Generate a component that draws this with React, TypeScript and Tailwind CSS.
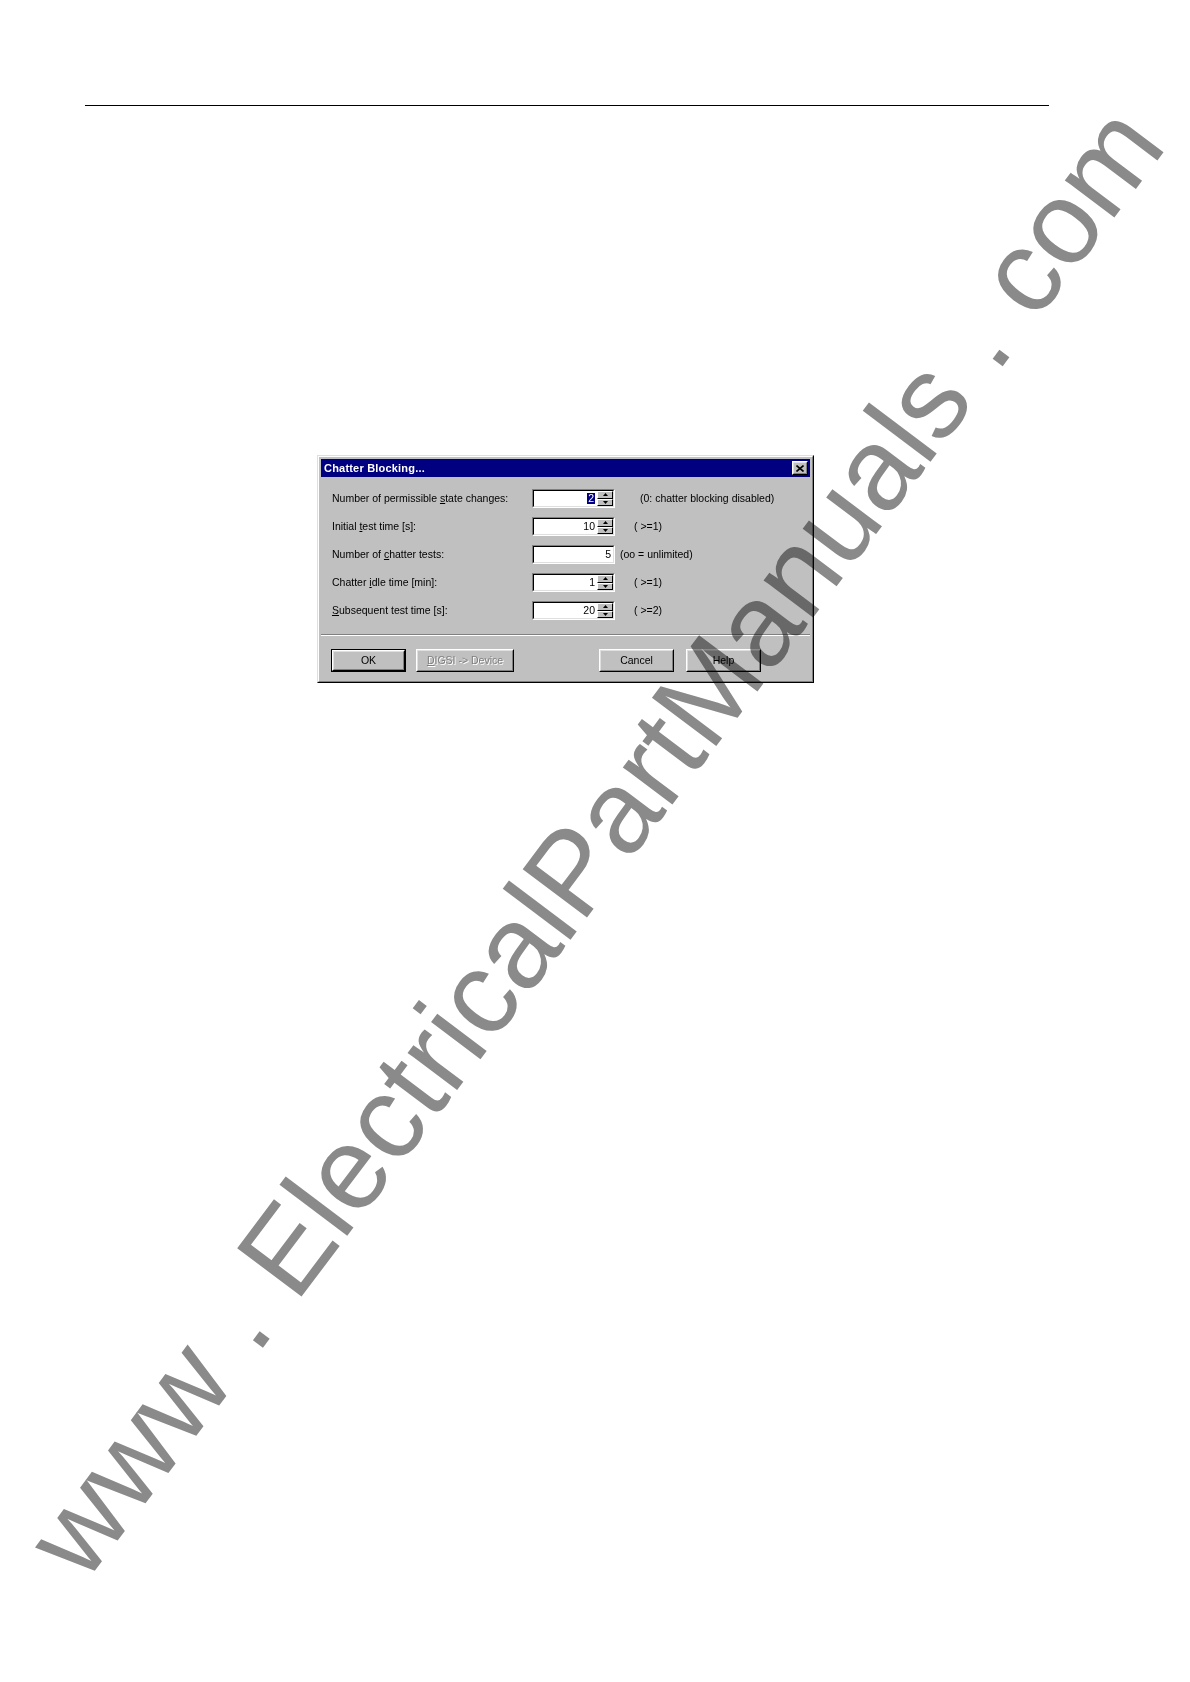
import React from "react";

const raised =
  "border border-t-white border-l-white border-b-black border-r-black";
const raisedInner =
  "border border-t-[#dfdfdf] border-l-[#dfdfdf] border-b-[#808080] border-r-[#808080]";

const Arrow = ({ up }: { up?: boolean }) => (
  <svg width="5" height="3" viewBox="0 0 5 3" className="block">
    <path d={up ? "M2.5 0 L5 3 L0 3 Z" : "M0 0 L5 0 L2.5 3 Z"} fill="#000" />
  </svg>
);

const Spinner = () => (
  <div className="flex flex-col w-[16px] h-full">
    <div className={`flex-1 flex items-center justify-center bg-[#c0c0c0] ${raised}`}>
      <Arrow up />
    </div>
    <div className={`flex-1 flex items-center justify-center bg-[#c0c0c0] ${raised}`}>
      <Arrow />
    </div>
  </div>
);

const Field = ({
  value,
  spin,
  selected,
}: {
  value: string;
  spin?: boolean;
  selected?: boolean;
}) => (
  <div className="border border-t-[#808080] border-l-[#808080] border-b-white border-r-white">
    <div className="flex w-[81px] h-[17px] bg-white border border-t-black border-l-black border-b-[#dfdfdf] border-r-[#dfdfdf]">
      <div className="flex-1 flex items-center justify-end pr-[2px] leading-none">
        {selected ? (
          <span className="bg-[#000080] text-white px-[1px]">{value}</span>
        ) : (
          <span>{value}</span>
        )}
      </div>
      {spin && <Spinner />}
    </div>
  </div>
);

const Button = ({
  children,
  def,
  disabled,
  width,
}: {
  children: React.ReactNode;
  def?: boolean;
  disabled?: boolean;
  width: string;
}) => (
  <div className={`${width} h-[23px] ${def ? "border border-black" : ""}`}>
    <div className={`h-full bg-[#c0c0c0] ${raised}`}>
      <div
        className={`h-full flex items-center justify-center ${raisedInner} ${
          disabled ? "text-[#808080] [text-shadow:1px_1px_0_#fff]" : "text-black"
        }`}
      >
        {children}
      </div>
    </div>
  </div>
);

const rows: {
  label: React.ReactNode;
  value: string;
  spin: boolean;
  selected?: boolean;
  hint: string;
  hintGap: string;
}[] = [
  {
    label: (
      <>
        Number of permissible <u className="underline-offset-[1px]">s</u>tate changes:
      </>
    ),
    value: "2",
    spin: true,
    selected: true,
    hint: "(0: chatter blocking disabled)",
    hintGap: "ml-[25px]",
  },
  {
    label: (
      <>
        Initial <u className="underline-offset-[1px]">t</u>est time [s]:
      </>
    ),
    value: "10",
    spin: true,
    hint: "( >=1)",
    hintGap: "ml-[19px]",
  },
  {
    label: (
      <>
        Number of <u className="underline-offset-[1px]">c</u>hatter tests:
      </>
    ),
    value: "5",
    spin: false,
    hint: "(oo = unlimited)",
    hintGap: "ml-[5px]",
  },
  {
    label: (
      <>
        Chatter <u className="underline-offset-[1px]">i</u>dle time [min]:
      </>
    ),
    value: "1",
    spin: true,
    hint: "( >=1)",
    hintGap: "ml-[19px]",
  },
  {
    label: (
      <>
        <u className="underline-offset-[1px]">S</u>ubsequent test time [s]:
      </>
    ),
    value: "20",
    spin: true,
    hint: "( >=2)",
    hintGap: "ml-[19px]",
  },
];

export default function App() {
  return (
    <div className="relative w-[1190px] h-[1682px] bg-white overflow-hidden font-['Liberation_Sans',Arial,sans-serif]">
      <div className="pt-[105px] pl-[85px]">
        <div className="w-[964px] h-[1px] bg-black" />
      </div>

      {/* dialog */}
      <div className="mt-[349px] ml-[317px] w-[497px] h-[228px] border border-t-[#dfdfdf] border-l-[#dfdfdf] border-b-black border-r-black">
        <div className="h-full bg-[#c0c0c0] p-[2px] border border-t-white border-l-white border-b-[#808080] border-r-[#808080] text-[10.5px] text-black">
          <div className="h-[18px] bg-[#000080] flex items-center justify-between pl-[3px] pr-[2px]">
            <span className="text-white font-bold text-[11px] tracking-[0.2px]">
              Chatter Blocking...
            </span>
            <div className={`w-[16px] h-[14px] bg-[#c0c0c0] ${raised}`}>
              <div className={`h-full flex items-center justify-center ${raisedInner}`}>
                <svg width="8" height="7" viewBox="0 0 8 7">
                  <path d="M0.5 0.5 L7.5 6.5 M7.5 0.5 L0.5 6.5" stroke="#000" strokeWidth="1.6" />
                </svg>
              </div>
            </div>
          </div>

          <div className="flex flex-col gap-[9px] pt-[12px] pl-[11px]">
            {rows.map((r, i) => (
              <div key={i} className="flex items-center h-[19px]">
                <div className="w-[200px]">{r.label}</div>
                <Field value={r.value} spin={r.spin} selected={r.selected} />
                <div className={r.hintGap}>{r.hint}</div>
              </div>
            ))}
          </div>

          <div className="mt-[14px] border-t border-t-[#808080] border-b border-b-white" />

          <div className="flex pt-[13px] pl-[10px]">
            <Button def width="w-[75px]">
              OK
            </Button>
            <div className="ml-[10px]">
              <Button disabled width="w-[98px]">
                <span>
                  <u className="underline-offset-[1px]">D</u>IGSI -&gt; Device
                </span>
              </Button>
            </div>
            <div className="ml-[85px]">
              <Button width="w-[75px]">Cancel</Button>
            </div>
            <div className="ml-[12px]">
              <Button width="w-[75px]">Help</Button>
            </div>
          </div>
        </div>
      </div>

      {/* watermark */}
      <div className="absolute left-[594px] top-[841px] -translate-x-1/2 -translate-y-1/2 rotate-[-53deg] whitespace-nowrap text-[117px] leading-none text-[#8a8a8a] mix-blend-multiply pointer-events-none">
        www . ElectricalPartManuals . com
      </div>
    </div>
  );
}
